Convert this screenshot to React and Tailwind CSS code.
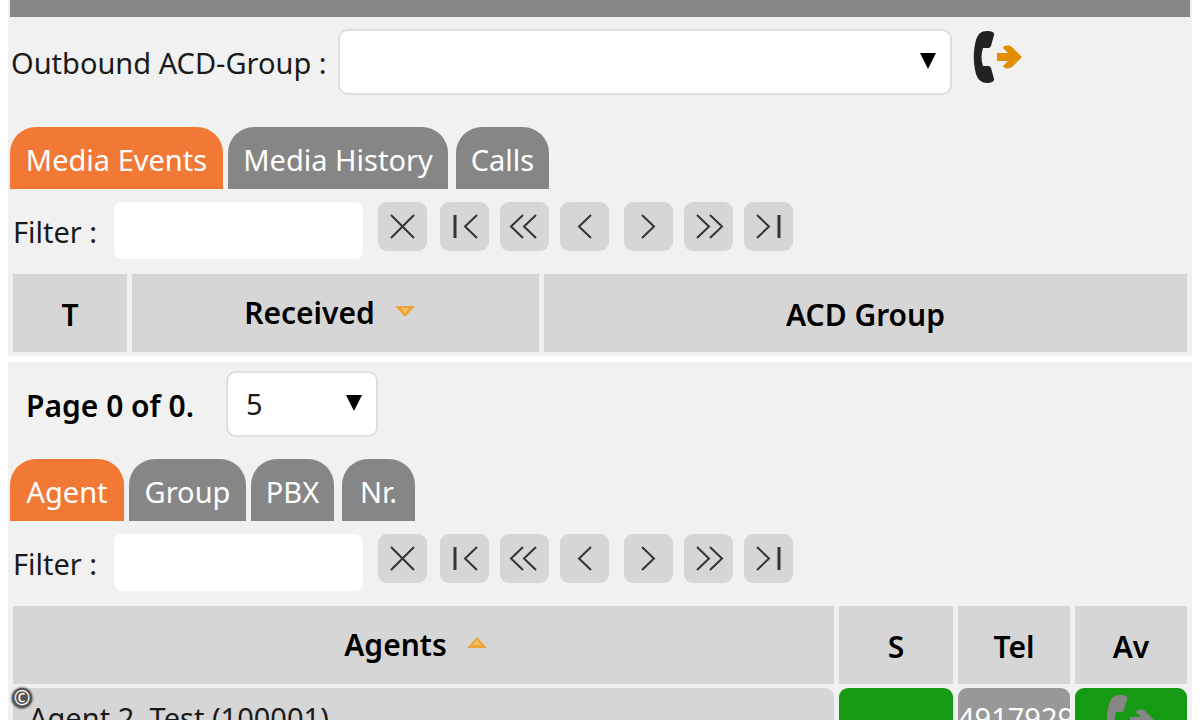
import { useState } from 'react';

const MEDIA_TABS = [
  { name: 'Media Events', width: 'w-[213px]' },
  { name: 'Media History', width: 'w-[220px] ml-[5px]' },
  { name: 'Calls', width: 'w-[93px] ml-2' },
];

const AGENT_TABS = [
  { name: 'Agent', width: 'w-[114px]' },
  { name: 'Group', width: 'w-[117px] ml-[5px]' },
  { name: 'PBX', width: 'w-[83px] ml-[5px]' },
  { name: 'Nr.', width: 'w-[73px] ml-2' },
];

// Icons live in a 49x49 box
const PAGER = [
  { label: 'Clear filter', d: 'M13 13L36 36M36 13L13 36', gap: 'ml-[15px]' },
  { label: 'First page', d: 'M37 13L25 24.5L37 36', bar: 15, gap: 'ml-[13px]' },
  { label: 'Fast back', d: 'M23 13L11 24.5L23 36M36 13L24 24.5L36 36', gap: 'ml-[11px]' },
  { label: 'Previous page', d: 'M31 13L19 24.5L31 36', gap: 'ml-[11px]' },
  { label: 'Next page', d: 'M18 13L30 24.5L18 36', gap: 'ml-[15px]' },
  { label: 'Fast forward', d: 'M13 13L25 24.5L13 36M26 13L38 24.5L26 36', gap: 'ml-[11px]' },
  { label: 'Last page', d: 'M13 13L25 24.5L13 36', bar: 35, gap: 'ml-[11px]' },
];

function PhoneIcon({ phone, arrow, className }) {
  return (
    <svg viewBox="0 0 50 54" className={className} aria-hidden="true">
      <path
        d="M14 1C8 1 5 4 3 10C0 21 0 33 3 44C5 50 9 53 14 53C18 53 22 51 21 49L18 38C17 36 16 36 14 36H10C8 30 8 24 10 18H14C16 18 17 18 18 16L21 5C22 2 18 1 14 1Z"
        fill={phone}
      />
      <path d="M24 23H35L30 18C31 15 36 15 39 17L49 27L39 37C36 39 31 39 30 36L35 31H24Z" fill={arrow} />
    </svg>
  );
}

function SortArrow({ up }) {
  return (
    <svg viewBox="0 0 20 12" className="w-5 h-3 mb-[2px] shrink-0" aria-hidden="true">
      <path d={up ? 'M0 11L10 0L20 11Z' : 'M0 1L10 12L20 1Z'} fill="#eba536" />
      <path d={up ? 'M6 8L10 3L14 8Z' : 'M6 3L10 8L14 3Z'} fill="#f7c060" />
    </svg>
  );
}

function Select({ id, label, options, className }) {
  return (
    <div className={`relative ${className}`}>
      <select
        id={id}
        aria-label={label}
        className="block appearance-none w-full h-[66px] pl-[18px] bg-white border-2 border-[#dedede] rounded-[10px] text-[29px] text-[#1a1a1a] outline-none"
      >
        {options.map((o) => <option key={o}>{o}</option>)}
      </select>
      <svg viewBox="0 0 16 16" className="absolute right-4 top-6 w-4 h-4 pointer-events-none" aria-hidden="true">
        <path d="M0 0H16L8 16Z" fill="#000" />
      </svg>
    </div>
  );
}

function Tabs({ tabs }) {
  const [active, setActive] = useState(tabs[0].name);
  return (
    <div role="tablist" className="flex pl-[2px]">
      {tabs.map((t) => (
        <button
          key={t.name}
          role="tab"
          aria-selected={active === t.name}
          onClick={() => setActive(t.name)}
          className={`h-[62px] rounded-t-[26px] text-[29px] leading-[66px] text-white whitespace-nowrap
            ${t.width} ${active === t.name ? 'bg-[#f27935]' : 'bg-[#868686]'}`}
        >
          {t.name}
        </button>
      ))}
    </div>
  );
}

function FilterBar({ id }) {
  return (
    <div className="flex items-start pt-[13px] pl-[5px]">
      <label htmlFor={id} className="w-[101px] text-[29px] leading-[60px] whitespace-nowrap">Filter :</label>
      <input id={id} type="text" className="w-[249px] h-[57px] px-3 bg-white rounded-[8px] text-[29px] outline-none" />
      {PAGER.map((b) => (
        <button key={b.label} aria-label={b.label} className={`w-[49px] h-[49px] rounded-[9px] bg-[#d6d6d6] ${b.gap}`}>
          <svg viewBox="0 0 49 49" fill="none" stroke="#333" strokeWidth="2" className="w-full h-full">
            <path d={b.d} />
            {b.bar && <path d={`M${b.bar} 13V36`} strokeWidth="3" />}
          </svg>
        </button>
      ))}
    </div>
  );
}

export default function App() {
  return (
    <div className="relative h-screen overflow-hidden bg-white px-2 font-['Noto_Sans','Open_Sans',sans-serif] text-[#1a1a1a]">
      <section className="bg-[#f1f1f1] pb-px">
        <div className="mx-[2px] h-[17px] bg-[#868686]" />

        <div className="flex items-start pt-3 pb-[30px] pl-[3px]">
          <label htmlFor="acd-group" className="w-[327px] text-[29px] leading-[68px] whitespace-nowrap">
            Outbound ACD-Group :
          </label>
          <Select id="acd-group" label="Outbound ACD-Group" options={['']} className="w-[52%]" />
          <button aria-label="Call out" className="ml-[21px] pt-px">
            <PhoneIcon phone="#222" arrow="#e08e00" className="w-[50px] h-[54px]" />
          </button>
        </div>

        <Tabs tabs={MEDIA_TABS} />
        <FilterBar id="media-filter" />

        <table className="w-full table-fixed border-separate border-spacing-x-[5px] border-spacing-y-0 mt-3 mb-[3px]">
          <thead>
            <tr className="h-[78px] text-[30px] text-black">
              <th className="w-[114px] p-0 pt-[2px] bg-[#d6d6d6] font-semibold">T</th>
              <th className="w-[407px] p-0 pb-[2px] bg-[#d6d6d6] font-semibold">
                <span className="flex items-center justify-center gap-5 pr-3">Received <SortArrow /></span>
              </th>
              <th className="p-0 pt-[2px] bg-[#d6d6d6] font-semibold">ACD Group</th>
            </tr>
          </thead>
        </table>
      </section>

      <section className="mt-[6px] bg-[#f1f1f1]">
        <div className="flex items-start pt-[9px] pb-[18px] pl-[18px]">
          <span className="w-[200px] text-[30px] leading-[70px] font-semibold text-black whitespace-nowrap">Page 0 of 0.</span>
          <Select id="page-size" label="Rows per page" options={['5', '10', '20']} className="w-[152px]" />
        </div>

        <Tabs tabs={AGENT_TABS} />
        <FilterBar id="agent-filter" />

        <table className="w-full table-fixed border-separate border-spacing-x-[5px] border-spacing-y-0 mt-3">
          <thead>
            <tr className="h-[78px] text-[30px] text-black">
              <th className="p-0 pb-[2px] bg-[#d6d6d6] font-semibold">
                <span className="flex items-center justify-center gap-5 pr-4">Agents <SortArrow up /></span>
              </th>
              <th className="w-[114px] p-0 pt-[2px] bg-[#d6d6d6] font-semibold">S</th>
              <th className="w-[112px] p-0 pt-[2px] bg-[#d6d6d6] font-semibold">Tel</th>
              <th className="w-[112px] p-0 pt-[2px] bg-[#d6d6d6] font-semibold">Av</th>
            </tr>
          </thead>
          <tbody>
            <tr aria-hidden="true"><td className="h-1 p-0" colSpan={4} /></tr>
            <tr className="h-[66px] text-[29px]">
              <td className="p-0 pl-4 pb-[6px] rounded-[9px] bg-[#d6d6d6]">Agent 2, Test (100001)</td>
              <td className="p-0 rounded-[9px] bg-[#169a13]" />
              <td className="p-0 pb-[6px] rounded-[9px] bg-[#989898] text-white">
                <div className="overflow-hidden whitespace-nowrap">4917929</div>
              </td>
              <td className="p-0 rounded-[9px] bg-[#169a13]">
                <PhoneIcon phone="#868686" arrow="#868686" className="mx-auto w-[50px] h-[54px]" />
              </td>
            </tr>
          </tbody>
        </table>
      </section>

      <span className="absolute left-3 bottom-3 w-5 h-5 rounded-full bg-[#555] text-white text-[20px] leading-5 text-center shadow-[0_0_3px_#000]">
        ©
      </span>
    </div>
  );
}
